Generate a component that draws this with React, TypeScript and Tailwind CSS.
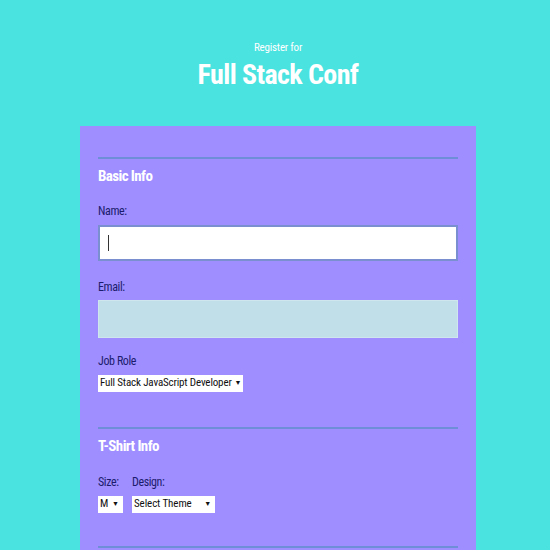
import React from "react";

const font = { fontFamily: '"Roboto Condensed", "Liberation Sans Narrow", "Arial Narrow", Roboto, sans-serif' };

export default function App() {
  return (
    <div className="min-h-[550px] bg-[#4ae3e0] flex flex-col items-center pl-[6px] overflow-hidden" style={font}>
      <header className="pt-[41px] flex flex-col items-center text-white">
        <div className="text-[11px] leading-[14px] tracking-[-0.2px]">Register for</div>
        <h1 className="text-[28px] leading-[36px] font-bold mt-[2px] tracking-[-0.6px]">Full Stack Conf</h1>
      </header>
      <form className="mt-[33px] w-[396px] bg-[#9e8eff] px-[18px] pt-[31px] pb-[20px]">
        <fieldset>
          <div className="h-[2px] bg-[#6f8ed8]" />
          <h2 className="text-white font-bold text-[15px] leading-[20px] mt-[7px] tracking-[-0.6px]">Basic Info</h2>
          <label className="block text-[#1c1c6c] text-[12px] leading-[16px] mt-[17px] tracking-[-0.4px]">Name:</label>
          <div className="mt-[6px] h-[36px] bg-white border-2 border-[#7a8fd0] flex items-center pl-[8px]">
            <div className="w-[1px] h-[16px] bg-[#333]" />
          </div>
          <label className="block text-[#1c1c6c] text-[12px] leading-[16px] mt-[18px] tracking-[-0.4px]">Email:</label>
          <div className="mt-[5px] h-[38px] bg-[#c1dfe9] border border-[#cfe6ee]" />
          <label className="block text-[#1c1c6c] text-[12px] leading-[16px] mt-[15px] tracking-[-0.4px]">Job Role</label>
          <div className="mt-[6px] w-[145px] flex items-center justify-between gap-[3px] h-[17px] bg-white pl-[2px] pr-[4px] text-[11px] text-[#111] tracking-[-0.15px] whitespace-nowrap">
            <span>Full Stack JavaScript Developer</span>
            <span className="text-[7px] shrink-0">▼</span>
          </div>
        </fieldset>
        <fieldset className="mt-[35px]">
          <div className="h-[2px] bg-[#6f8ed8]" />
          <h2 className="text-white font-bold text-[15px] leading-[20px] mt-[7px] tracking-[-0.6px]">T-Shirt Info</h2>
          <div className="flex gap-[9px] mt-[18px]">
            <div className="flex flex-col">
              <label className="text-[#1c1c6c] text-[12px] leading-[16px] tracking-[-0.4px]">Size:</label>
              <div className="mt-[6px] w-[25px] h-[17px] bg-white flex items-center justify-between pl-[2px] pr-[4px] text-[11px] text-[#111] whitespace-nowrap">
                <span>M</span>
                <span className="text-[7px] shrink-0">▼</span>
              </div>
            </div>
            <div className="flex flex-col">
              <label className="text-[#1c1c6c] text-[12px] leading-[16px] tracking-[-0.4px]">Design:</label>
              <div className="mt-[6px] w-[83px] h-[17px] bg-white flex items-center justify-between pl-[2px] pr-[4px] text-[11px] text-[#111] tracking-[-0.1px] whitespace-nowrap">
                <span>Select Theme</span>
                <span className="text-[7px] shrink-0">▼</span>
              </div>
            </div>
          </div>
        </fieldset>
        <fieldset className="mt-[33px]">
          <div className="h-[2px] bg-[#6f8ed8]" />
          <div className="h-[40px]" />
        </fieldset>
      </form>
    </div>
  );
}
